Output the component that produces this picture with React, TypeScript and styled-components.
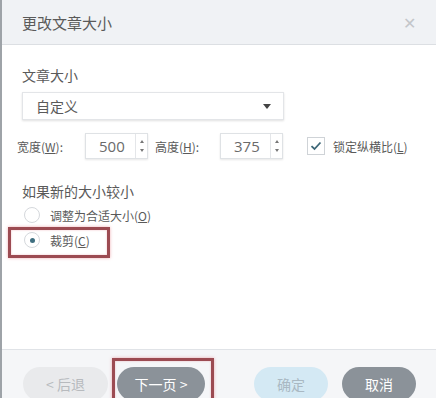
import styled, { createGlobalStyle } from "styled-components";

const Global = createGlobalStyle`
  html, body { margin: 0; padding: 0; background: #fff; }
  body { font-family: "Noto Sans CJK SC", "Noto Sans", sans-serif; color: #555; }
`;

const Dialog = styled.div`
  position: relative;
  width: 436px;
  height: 398px;
  overflow: hidden;
  display: flex;
  flex-direction: column;
  box-sizing: border-box;
  border-left: 2px solid #9ea3a8;
  background: #fff;
`;

const Header = styled.div`
  height: 44px;
  flex: none;
  display: flex;
  align-items: center;
  justify-content: space-between;
  padding: 0 20px 0 20px;
  background: #f0f2f5;
  border-bottom: 1px solid #dcdfe3;
  font-size: 15px;
  color: #5a5a5a;
`;

const Close = styled.span`
  color: #c3c6ca;
  font-size: 16px;
  line-height: 1;
`;

const Body = styled.div`
  flex: 1;
  position: relative;
  padding: 20px 0 0 20px;
`;

const Label = styled.div<{ $top?: number }>`
  font-size: 14px;
  line-height: 20px;
  color: #5a5a5a;
  margin-top: ${(p) => p.$top ?? 0}px;
`;

const Select = styled.div`
  margin-top: 7px;
  width: 262px;
  height: 28px;
  box-sizing: border-box;
  border: 1px solid #e3e5e8;
  box-shadow: 0 1px 2px rgba(0, 0, 0, 0.12);
  display: flex;
  align-items: center;
  justify-content: space-between;
  padding: 0 12px 0 13px;
  font-size: 14px;
  color: #5a5a5a;
`;

const Caret = styled.span`
  width: 0;
  height: 0;
  border-left: 4px solid transparent;
  border-right: 4px solid transparent;
  border-top: 5px solid #444;
`;

const SizeRow = styled.div`
  margin: 13px 0 0 -5px;
  display: flex;
  align-items: center;
  height: 26px;
`;

const SmallLabel = styled.span<{ $w: number; $gap?: number }>`
  width: ${(p) => p.$w}px;
  margin-left: ${(p) => p.$gap ?? 0}px;
  font-size: 12px;
  color: #5a5a5a;
  u { text-decoration: underline; }
`;

const Spin = styled.div`
  width: 63px;
  height: 26px;
  box-sizing: border-box;
  border: 1px solid #dfe2e5;
  box-shadow: 0 1px 2px rgba(0, 0, 0, 0.1);
  display: flex;
`;

const SpinValue = styled.span`
  flex: 1;
  padding-left: 13px;
  font-size: 15px;
  line-height: 24px;
  color: #6a6a6a;
  font-family: "Open Sans", "Noto Sans", sans-serif;
`;

const SpinArrows = styled.div`
  width: 11px;
  border-left: 1px solid #e4e6e9;
  display: flex;
  flex-direction: column;
  align-items: center;
  justify-content: space-around;
  padding: 3px 0;
`;

const Tri = styled.span<{ $up?: boolean }>`
  width: 0;
  height: 0;
  border-left: 2px solid transparent;
  border-right: 2px solid transparent;
  ${(p) => (p.$up ? "border-bottom: 3px solid #777;" : "border-top: 3px solid #777;")}
`;

const Check = styled.span`
  margin-left: 24px;
  width: 18px;
  height: 18px;
  box-sizing: border-box;
  border: 1px solid #cfd3d7;
  display: flex;
  align-items: center;
  justify-content: center;
`;

const CheckText = styled.span`
  margin-left: 8px;
  font-size: 12px;
  color: #5a5a5a;
`;

const RadioRow = styled.div`
  display: flex;
  align-items: center;
  height: 22px;
  margin-top: 3px;
`;

const Radio = styled.span<{ $on?: boolean }>`
  width: 16px;
  height: 16px;
  box-sizing: border-box;
  border-radius: 50%;
  border: 1px solid #d5d8dc;
  display: flex;
  align-items: center;
  justify-content: center;
  margin-left: 2px;
  &::after {
    content: "";
    width: 5px;
    height: 5px;
    border-radius: 50%;
    background: ${(p) => (p.$on ? "#3f6f80" : "transparent")};
  }
`;

const RadioText = styled.span`
  margin-left: 10px;
  font-size: 12px;
  color: #5a5a5a;
`;

const Mark = styled.div<{ $x: number; $y: number; $w: number; $h: number }>`
  position: absolute;
  left: ${(p) => p.$x}px;
  top: ${(p) => p.$y}px;
  width: ${(p) => p.$w}px;
  height: ${(p) => p.$h}px;
  box-sizing: border-box;
  border: 3px solid #9c4b52;
  box-shadow: 0 0 3px rgba(230, 120, 130, 0.6), inset 0 0 2px rgba(230, 120, 130, 0.5);
  pointer-events: none;
`;

const Footer = styled.div`
  height: 49px;
  flex: none;
  background: #f5f6f8;
  border-top: 1px solid #e0e3e7;
  display: flex;
  padding: 17px 0 0 21px;
  box-sizing: border-box;
  position: relative;
`;

const Btn = styled.div<{ $bg: string; $fg: string; $w: number; $gap: number }>`
  width: ${(p) => p.$w}px;
  height: 34px;
  margin-left: ${(p) => p.$gap}px;
  border-radius: 17px;
  background: ${(p) => p.$bg};
  color: ${(p) => p.$fg};
  font-size: 14px;
  display: flex;
  justify-content: center;
  padding-top: 7px;
  box-sizing: border-box;
  flex: none;
`;

export default function App() {
  return (
    <>
      <Global />
      <Dialog>
        <Header>
          <span>更改文章大小</span>
          <Close>✕</Close>
        </Header>
        <Body>
          <Label>文章大小</Label>
          <Select>
            <span>自定义</span>
            <Caret />
          </Select>
          <SizeRow>
            <SmallLabel $w={68}>
              宽度(<u>W</u>):
            </SmallLabel>
            <Spin>
              <SpinValue>500</SpinValue>
              <SpinArrows>
                <Tri $up />
                <Tri />
              </SpinArrows>
            </Spin>
            <SmallLabel $w={65} $gap={7}>
              高度(<u>H</u>):
            </SmallLabel>
            <Spin>
              <SpinValue>375</SpinValue>
              <SpinArrows>
                <Tri $up />
                <Tri />
              </SpinArrows>
            </Spin>
            <Check>
              <svg width="12" height="10" viewBox="0 0 12 10">
                <path d="M1.5 5.2 L4.5 8 L10.5 1.5" fill="none" stroke="#3d6777" strokeWidth="1.8" />
              </svg>
            </Check>
            <CheckText>
              锁定纵横比(<u>L</u>)
            </CheckText>
          </SizeRow>
          <Label $top={22}>如果新的大小较小</Label>
          <RadioRow>
            <Radio />
            <RadioText>
              调整为合适大小(<u>O</u>)
            </RadioText>
          </RadioRow>
          <RadioRow>
            <Radio $on />
            <RadioText>
              裁剪(<u>C</u>)
            </RadioText>
          </RadioRow>
          <Mark $x={6} $y={182} $w={102} $h={31} />
        </Body>
        <Footer>
          <Btn $bg="#e9eaec" $fg="#b7babe" $w={85} $gap={0}>&lt; 后退</Btn>
          <Btn $bg="#8b9299" $fg="#fff" $w={88} $gap={9}>下一页 &gt;</Btn>
          <Btn $bg="#d4e9f4" $fg="#a9b8c2" $w={74} $gap={49}>确定</Btn>
          <Btn $bg="#8b9299" $fg="#fff" $w={74} $gap={14}>取消</Btn>
          <Mark $x={110} $y={8} $w={102} $h={45} />
        </Footer>
      </Dialog>
    </>
  );
}
